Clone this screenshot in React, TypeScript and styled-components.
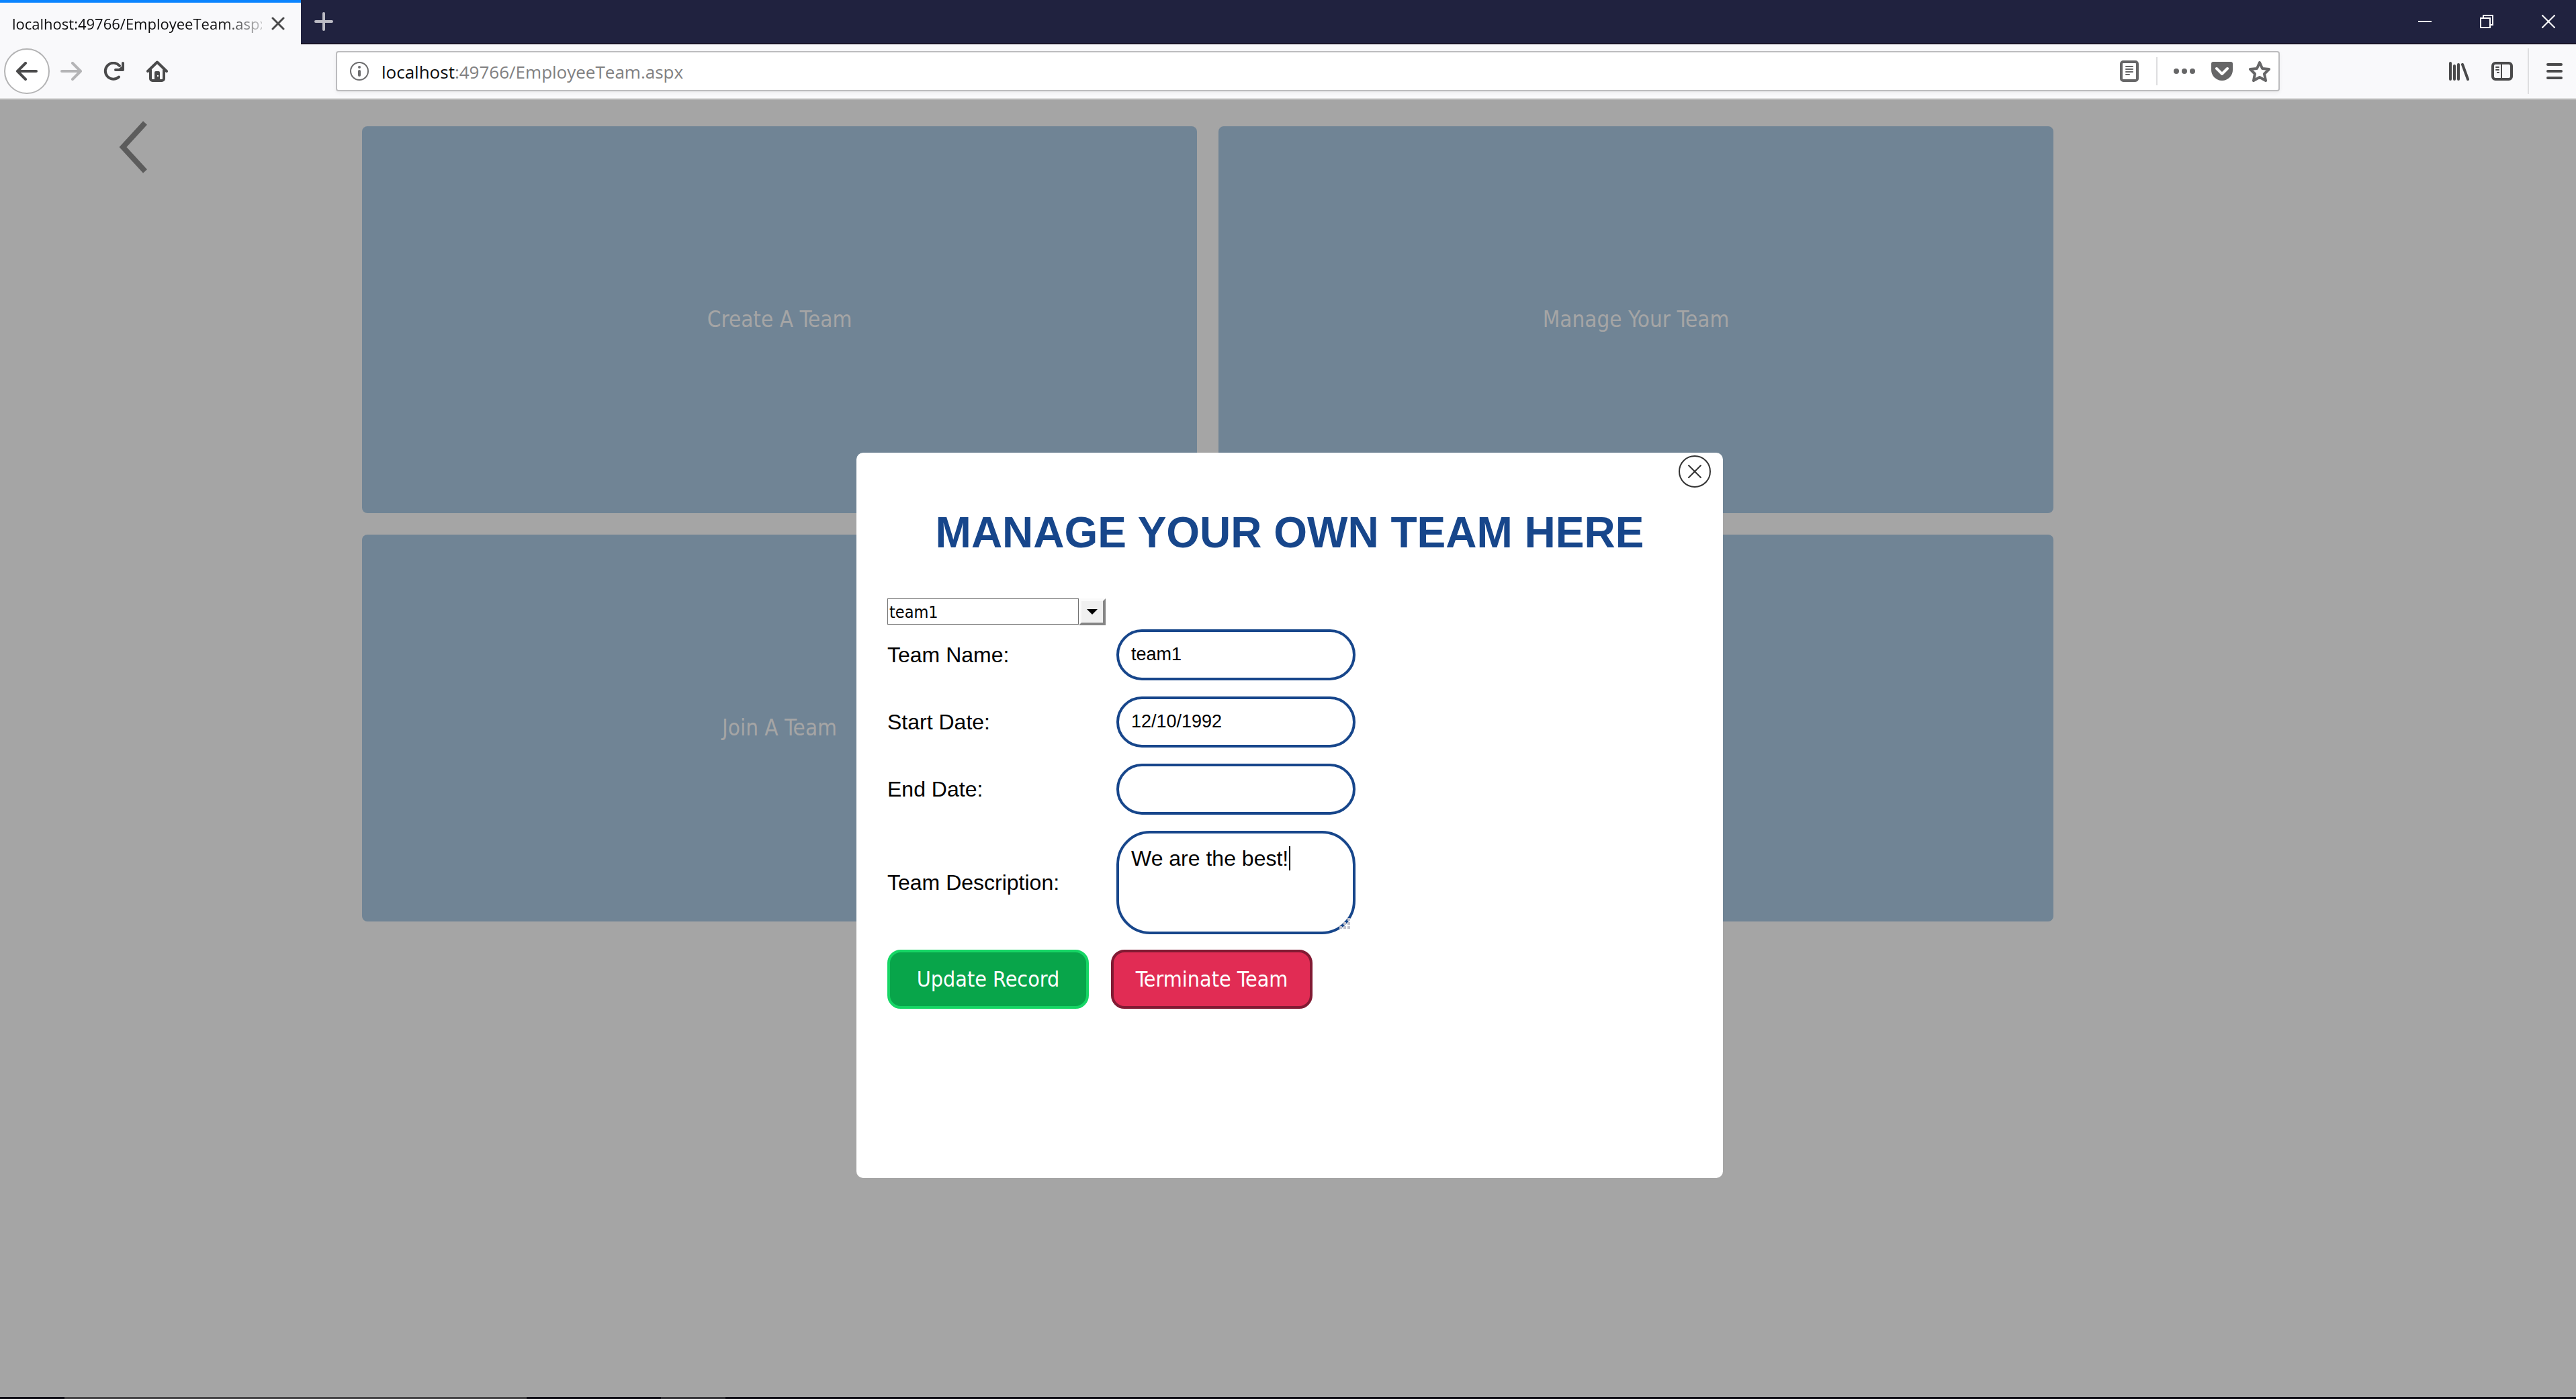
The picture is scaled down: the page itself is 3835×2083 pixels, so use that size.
import React, { useState } from "react";
import styled, { createGlobalStyle } from "styled-components";

const ui = `"Open Sans", "Noto Sans", sans-serif`;
const arial = `"Liberation Sans", Arial, sans-serif`;
const tahoma = `"DejaVu Sans Condensed", Tahoma, sans-serif`;
const navy = "#17468b";

const GlobalStyle = createGlobalStyle`
  * { box-sizing: border-box; }
  html, body, #root { height: 100%; }
  body { margin: 0; background: #a5a5a5; overflow: hidden; }
  button, input, select, textarea { margin: 0; font: inherit; }
  button { padding: 0; border: 0; background: none; cursor: pointer; }
  svg { display: block; }
`;

const Window = styled.div`
  display: flex;
  flex-direction: column;
  height: 100%;
`;

const TabBar = styled.header`
  display: flex;
  height: 66px;
  background: #20223f;
  border-bottom: 2px solid #181427;
`;

const Tab = styled.div`
  display: flex;
  align-items: center;
  gap: 10px;
  width: 448px;
  height: 66px;
  padding: 0 20px 0 18px;
  border-top: 4px solid #0a84ff;
  background: #f9f9fb;
`;

const TabTitle = styled.span`
  flex: 1;
  overflow: hidden;
  white-space: nowrap;
  font: 22px/32px ${ui};
  color: #0c0c0d;
  mask-image: linear-gradient(to right, #000 84%, transparent 104%);
`;

const IconButton = styled.button<{ $w: number; $color?: string }>`
  display: flex;
  align-items: center;
  justify-content: center;
  flex: none;
  width: ${(p) => p.$w}px;
  height: 64px;
  color: ${(p) => p.$color ?? "#4a4a4b"};
`;

const WindowControls = styled.div`
  display: flex;
  gap: 10px;
  margin-left: auto;
`;

const Toolbar = styled.nav`
  display: flex;
  align-items: center;
  height: 82px;
  padding-left: 6px;
  border-bottom: 2px solid #dddddd;
  background: #f9f9fb;
`;

const BackButton = styled.button`
  display: flex;
  align-items: center;
  justify-content: center;
  width: 68px;
  height: 68px;
  border: 2px solid #b3b3b4;
  border-radius: 50%;
  background: #fff;
  color: #4a4a4b;
`;

const AddressBar = styled.div`
  display: flex;
  align-items: center;
  flex: 1;
  height: 60px;
  margin: 0 235px 0 234px;
  border: 2px solid #bcbcbe;
  border-radius: 4px;
  background: #fff;
  box-shadow: 0 2px 6px rgba(0, 0, 0, 0.06);
  color: #666667;
`;

const Url = styled.div`
  flex: 1;
  padding-top: 2px;
  font: 26px/34px ${ui};
  color: #808081;

  b {
    font-weight: 400;
    color: #0c0c0d;
  }
`;

const Separator = styled.span<{ $h: number; $gap: number }>`
  width: 2px;
  height: ${(p) => p.$h}px;
  margin: 0 ${(p) => p.$gap}px;
  background: #dedee0;
`;

const Page = styled.main`
  position: relative;
  display: flex;
  flex: 1;
  align-items: flex-start;
  padding: 32px 0 0 177px;
`;

const PageBack = styled.button`
  color: #5c5c5c;
`;

const CardGrid = styled.div`
  display: grid;
  grid-template-columns: 1fr 1fr;
  gap: 32px;
  flex: 1;
  margin: 8px 778px 0 320px;
`;

const Card = styled.button`
  height: 576px;
  border-radius: 8px;
  background: #708495;
  color: #a5a5a5;
  font: 33px/40px ${tahoma};
`;

const Overlay = styled.div`
  position: absolute;
  inset: 0;
  display: flex;
  align-items: center;
  justify-content: center;
  padding: 199px 0 0 5px;
`;

const Dialog = styled.section`
  position: relative;
  width: 1290px;
  height: 1080px;
  padding: 82px 46px 0;
  border-radius: 10px;
  background: #fff;
  font: 32px/36px ${arial};
  color: #000;
`;

const CloseDialog = styled.button`
  position: absolute;
  top: 4px;
  right: 18px;
  color: #333;
`;

const Title = styled.h1`
  margin: 0 0 61px;
  text-align: center;
  font: 700 64px/74px ${arial};
  color: ${navy};
`;

const TeamPicker = styled.div`
  position: relative;
  width: 325px;
  height: 40px;
`;

const TeamSelect = styled.select`
  appearance: none;
  display: block;
  width: 285px;
  height: 39px;
  padding: 2px 2px 0;
  border: 1px solid #707070;
  border-radius: 0;
  background: #fff;
  color: #000;
  font: 25px/36px ${tahoma};
`;

const PickerArrow = styled.span`
  position: absolute;
  top: 0;
  right: 0;
  display: flex;
  align-items: center;
  justify-content: center;
  width: 40px;
  height: 40px;
  border: 4px solid;
  border-color: #fafafa #858585 #858585 #fafafa;
  background: #f0f0f0;
  pointer-events: none;
`;

const Fields = styled.div`
  display: grid;
  grid-template-columns: 341px 356px;
  align-items: center;
  row-gap: 24px;
  margin-top: 6px;
`;

const TextInput = styled.input`
  width: 100%;
  height: 76px;
  padding: 0 18px;
  border: 4px solid ${navy};
  border-radius: 38px;
  background: #fff;
  color: #000;
  font: 27px/32px ${arial};
  outline: 0;
`;

const AreaWrap = styled.div`
  position: relative;
`;

const Area = styled.textarea`
  display: block;
  width: 100%;
  height: 154px;
  padding: 19px 18px;
  border: 4px solid ${navy};
  border-radius: 50px;
  background: #fff;
  color: #000;
  font: 32px/36px ${arial};
  resize: none;
  outline: 0;
  overflow: hidden;
`;

const Caret = styled.i`
  position: absolute;
  top: 23px;
  left: 257px;
  width: 2px;
  height: 36px;
  background: #000;
`;

const Grip = styled.svg`
  position: absolute;
  right: 8px;
  bottom: 8px;
`;

const Actions = styled.div`
  display: flex;
  gap: 33px;
  margin-top: 23px;
`;

const ActionButton = styled.button<{ $bg: string; $edge: string }>`
  width: 300px;
  height: 88px;
  border: 4px solid ${(p) => p.$edge};
  border-radius: 20px;
  background: ${(p) => p.$bg};
  color: #fff;
  font: 32px/40px ${tahoma};
`;

const TaskbarEdge = styled.footer`
  display: grid;
  grid-template-columns: 96px 688px 200px 96px 1fr;
  height: 3px;
  background: #0e0d14;
`;

const TaskbarItem = styled.span<{ $column: number; $color: string }>`
  grid-column: ${(p) => p.$column};
  background: ${(p) => p.$color};
`;

const line = { fill: "none", stroke: "currentColor", strokeLinecap: "round", strokeLinejoin: "round" } as const;

const cards = ["Create A Team", "Manage Your Team", "Join A Team", ""];

export default function App() {
  const [name, setName] = useState("team1");
  const [start, setStart] = useState("12/10/1992");
  const [end, setEnd] = useState("");
  const [text, setText] = useState("We are the best!");

  return (
    <Window>
      <GlobalStyle />
      <TabBar>
        <Tab>
          <TabTitle>localhost:49766/EmployeeTeam.aspx</TabTitle>
          <IconButton $w={28} aria-label="Close tab">
            <svg width="20" height="20" viewBox="0 0 20 20" {...line} strokeWidth="3">
              <path d="M2 2l16 16M18 2L2 18" />
            </svg>
          </IconButton>
        </Tab>
        <IconButton $w={68} $color="#bcbcc5" aria-label="New tab">
          <svg width="28" height="28" viewBox="0 0 28 28" {...line} strokeWidth="4">
            <path d="M14 2v24M2 14h24" />
          </svg>
        </IconButton>
        <WindowControls>
          <IconButton $w={82} $color="#fff" aria-label="Minimize">
            <svg width="20" height="20" viewBox="0 0 20 20"><path d="M0 9h20v2H0z" fill="currentColor" /></svg>
          </IconButton>
          <IconButton $w={82} $color="#fff" aria-label="Restore">
            <svg width="20" height="20" viewBox="0 0 20 20" fill="none" stroke="currentColor" strokeWidth="2">
              <path d="M1 5h14v14H1zM5 5V1h14v14h-4" />
            </svg>
          </IconButton>
          <IconButton $w={82} $color="#fff" aria-label="Close">
            <svg width="20" height="20" viewBox="0 0 20 20" fill="none" stroke="currentColor" strokeWidth="2">
              <path d="M0 0l20 20M20 0L0 20" />
            </svg>
          </IconButton>
        </WindowControls>
      </TabBar>

      <Toolbar>
        <BackButton aria-label="Back">
          <svg width="32" height="28" viewBox="0 0 32 28" {...line} strokeWidth="4">
            <path d="M30 14H2M14 2L2 14l12 12" />
          </svg>
        </BackButton>
        <IconButton $w={64} $color="#b4b4b6" aria-label="Forward">
          <svg width="32" height="28" viewBox="0 0 32 28" {...line} strokeWidth="4">
            <path d="M2 14h28M18 2l12 12-12 12" />
          </svg>
        </IconButton>
        <IconButton $w={64} aria-label="Reload">
          <svg width="32" height="28" viewBox="0 0 32 28">
            <path d="M23 22.500A12 12 0 1 1 24 6" {...line} strokeWidth="4" />
            <path d="M27 2a2 2 0 0 1 4 0v10a2 2 0 0 1-2 2H18a2 2 0 0 1 0-4h5l4-3z" fill="currentColor" />
          </svg>
        </IconButton>
        <IconButton $w={64} aria-label="Home">
          <svg width="32" height="32" viewBox="0 0 32 32">
            <path d="M2 16L16 2.500 30 16" {...line} strokeWidth="4" />
            <path d="M6 14v13a3 3 0 0 0 3 3h14a3 3 0 0 0 3-3V14" {...line} strokeWidth="4" />
            <path fillRule="evenodd" d="M12 30V18a2 2 0 0 1 2-2h4a2 2 0 0 1 2 2v12zM16 22v2h2v-2z" fill="currentColor" />
          </svg>
        </IconButton>
        <AddressBar>
          <IconButton $w={66} $color="#6d6d6e" aria-label="Site information">
            <svg width="28" height="28" viewBox="0 0 28 28">
              <circle cx="14" cy="14" r="13" fill="none" stroke="currentColor" strokeWidth="2" />
              <circle cx="14" cy="8" r="2" fill="currentColor" />
              <rect x="12" y="12" width="4" height="10" rx="2" fill="currentColor" />
            </svg>
          </IconButton>
          <Url><b>localhost</b>:49766/EmployeeTeam.aspx</Url>
          <IconButton $w={56} $color="#666667" aria-label="Reader view">
            <svg width="28" height="32" viewBox="0 0 28 32">
              <rect x="2" y="2" width="24" height="28" rx="3" {...line} strokeWidth="4" />
              <path d="M9 9h10M9 13h10M9 17h10M9 21h5" {...line} strokeWidth="2" />
            </svg>
          </IconButton>
          <Separator $h={42} $gap={12} />
          <IconButton $w={56} $color="#666667" aria-label="Page actions">
            <svg width="32" height="8" viewBox="0 0 32 8" fill="currentColor">
              <circle cx="4" cy="4" r="4" /><circle cx="16" cy="4" r="4" /><circle cx="28" cy="4" r="4" />
            </svg>
          </IconButton>
          <IconButton $w={56} $color="#666667" aria-label="Save to Pocket">
            <svg width="32" height="28" viewBox="0 0 32 28">
              <path d="M3 0h26a3 3 0 0 1 3 3v9a16 16 0 0 1-32 0V3a3 3 0 0 1 3-3z" fill="currentColor" />
              <path d="M8 10l8 8 8-8" fill="none" stroke="#fff" strokeWidth="4" strokeLinecap="round" strokeLinejoin="round" />
            </svg>
          </IconButton>
          <IconButton $w={56} $color="#666667" aria-label="Bookmark this page">
            <svg width="32" height="32" viewBox="0 0 32 32" {...line} strokeWidth="4">
              <path d="M16 3l4 9 10 1-7 7 2 10-9-5-9 5 2-10-7-7 10-1z" />
            </svg>
          </IconButton>
        </AddressBar>
        <IconButton $w={64} aria-label="Library">
          <svg width="32" height="28" viewBox="0 0 32 28" {...line} strokeWidth="4">
            <path d="M3 2v24M9 6v20M15 4v22M21 4l8 22" />
          </svg>
        </IconButton>
        <IconButton $w={64} aria-label="Sidebars">
          <svg width="32" height="28" viewBox="0 0 32 28">
            <rect x="2" y="2" width="28" height="24" rx="4" {...line} strokeWidth="4" />
            <path d="M15 3v22M7 8h4M7 12h4M9 16h2" {...line} strokeWidth="2" />
          </svg>
        </IconButton>
        <Separator $h={68} $gap={6} />
        <IconButton $w={64} aria-label="Menu">
          <svg width="24" height="24" viewBox="0 0 24 24" {...line} strokeWidth="4">
            <path d="M2 2h20M2 12h20M2 22h20" />
          </svg>
        </IconButton>
      </Toolbar>

      <Page>
        <PageBack aria-label="Go back">
          <svg width="42" height="78" viewBox="0 0 42 78" fill="none" stroke="currentColor" strokeWidth="8">
            <path d="M39 3L6 39l33 36" />
          </svg>
        </PageBack>
        <CardGrid>
          {cards.map((label, i) => (
            <Card key={i}>{label}</Card>
          ))}
        </CardGrid>
        <Overlay>
          <Dialog role="dialog" aria-labelledby="dialog-title">
            <CloseDialog aria-label="Close dialog">
              <svg width="48" height="48" viewBox="0 0 48 48" {...line} strokeWidth="2">
                <circle cx="24" cy="24" r="23" />
                <path d="M15 15l18 18M33 15L15 33" />
              </svg>
            </CloseDialog>
            <Title id="dialog-title">MANAGE YOUR OWN TEAM HERE</Title>
            <TeamPicker>
              <TeamSelect aria-label="Team">
                <option>team1</option>
              </TeamSelect>
              <PickerArrow>
                <svg width="16" height="8" viewBox="0 0 16 8"><path d="M0 0h16L8 8z" /></svg>
              </PickerArrow>
            </TeamPicker>
            <Fields>
              <label htmlFor="name">Team Name:</label>
              <TextInput id="name" value={name} onChange={(e) => setName(e.target.value)} />
              <label htmlFor="start">Start Date:</label>
              <TextInput id="start" value={start} onChange={(e) => setStart(e.target.value)} />
              <label htmlFor="end">End Date:</label>
              <TextInput id="end" value={end} onChange={(e) => setEnd(e.target.value)} />
              <label htmlFor="description">Team Description:</label>
              <AreaWrap>
                <Area id="description" value={text} onChange={(e) => setText(e.target.value)} />
                <Caret />
                <Grip width="16" height="16" viewBox="0 0 16 16" fill="#c3c3cd">
                  <path d="M12 0h4v4h-4zM6 6h4v4H6zM12 6h4v4h-4zM0 12h4v4H0zM6 12h4v4H6zM12 12h4v4h-4z" />
                </Grip>
              </AreaWrap>
            </Fields>
            <Actions>
              <ActionButton $bg="#08a54a" $edge="#16d665">Update Record</ActionButton>
              <ActionButton $bg="#e12c54" $edge="#821a33">Terminate Team</ActionButton>
            </Actions>
          </Dialog>
        </Overlay>
      </Page>

      <TaskbarEdge>
        <TaskbarItem $column={2} $color="#444345" />
        <TaskbarItem $column={4} $color="#353438" />
      </TaskbarEdge>
    </Window>
  );
}
